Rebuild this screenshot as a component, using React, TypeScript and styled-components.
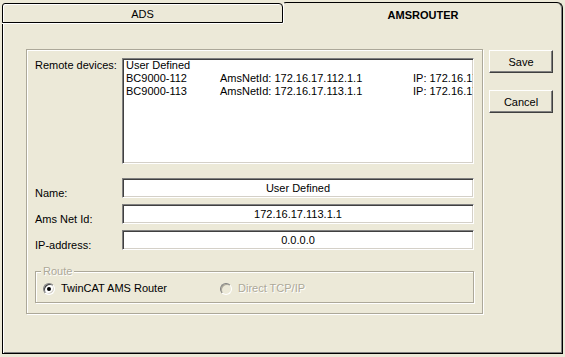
import styled, { createGlobalStyle, css } from 'styled-components';

const GlobalStyle = createGlobalStyle`
    html, body {
        margin: 0;
        padding: 0;
        background: #ECE9D8;
    }
    body {
        font-family: "Liberation Sans", Arial, sans-serif;
        font-size: 11px;
        color: #000;
    }
`

const sunken = css`
    border: 1px solid;
    border-color: #808080 #fff #fff #808080;
    box-shadow: inset 1px 1px 0 #404040, inset -1px -1px 0 #D4D0C8;
`

const etched = css`
    border: 1px solid #ACA899;
    box-shadow: inset 1px 1px 0 #fff, 1px 1px 0 #fff;
`

const Window = styled.div`
    width: 565px;
    height: 357px;
    box-sizing: border-box;
    padding: 2px 2px 3px 2px;
    background: #ECE9D8;
`
const TabStrip = styled.div`
    display: flex;
    align-items: flex-end;
    height: 21px;
`
type TabProps = {
    $active?: boolean
}
const Tab = styled.div<TabProps>`
    box-sizing: border-box;
    position: relative;
    z-index: 1;
    display: flex;
    justify-content: center;
    align-items: flex-start;
    line-height: 13px;
    ${({ $active }) => $active ? css`
        flex: 1;
        height: 21px;
        padding-top: 6px;
        border-top: 1px solid #000;
        border-right: 1px solid #000;
        border-left: 1px solid #fff;
        border-radius: 3px 6px 0 0;
        box-shadow: inset -1px 0 0 #808080;
        font-weight: bold;
    ` : css`
        width: 281px;
        height: 20px;
        padding-top: 4px;
        border: 1px solid #000;
        border-radius: 3px 4px 0 0;
        box-shadow: inset 1px 1px 0 #fff, 0 1px 0 #fff;
    `}
`
const Panel = styled.div`
    box-sizing: border-box;
    height: 331px;
    border: 1px solid #000;
    border-top: none;
    box-shadow: inset 1px 0 0 #fff, inset -1px -1px 0 #808080;
    padding: 26px 0 0 23px;
    display: flex;
    align-items: flex-start;
    gap: 6px;
`
const GroupBox = styled.div`
    box-sizing: border-box;
    width: 457px;
    height: 265px;
    padding: 8px 0 0 8px;
    ${etched}
`
const FormGrid = styled.div`
    display: grid;
    grid-template-columns: 87px 352px;
    row-gap: 4px;
`
type LabelProps = {
    $offset: number
}
const Label = styled.div<LabelProps>`
    line-height: 13px;
    padding-top: ${({ $offset }) => $offset}px;
    white-space: nowrap;
`
const ListBox = styled.div`
    box-sizing: border-box;
    height: 106px;
    margin-bottom: 10px;
    padding: 0 0 0 3px;
    background: #fff;
    overflow: hidden;
    ${sunken}
`
const DeviceRow = styled.div`
    display: grid;
    grid-template-columns: 94px 193px max-content;
    line-height: 13px;
    white-space: nowrap;
`
const Field = styled.div`
    box-sizing: border-box;
    height: 20px;
    line-height: 18px;
    text-align: center;
    background: #fff;
    ${sunken}
`
const RouteBox = styled.fieldset`
    box-sizing: border-box;
    width: 439px;
    min-width: 0;
    margin: 13px 0 0 0;
    padding: 0 0 7px 7px;
    ${etched}
`
const Legend = styled.legend`
    padding: 0 2px;
    margin-left: -2px;
    line-height: 13px;
    background: #ECE9D8;
    color: #ACA899;
    text-shadow: 1px 1px 0 #fff;
`
const RadioRow = styled.div`
    display: grid;
    grid-template-columns: 177px max-content;
    margin-top: 4px;
    line-height: 13px;
`
type RadioProps = {
    $disabled?: boolean
}
const RadioOption = styled.label<RadioProps>`
    display: flex;
    align-items: center;
    gap: 6px;
    color: ${({ $disabled }) => $disabled ? '#ACA899' : '#000'};
    text-shadow: ${({ $disabled }) => $disabled ? '1px 1px 0 #fff' : 'none'};
`
type CircleProps = {
    $checked?: boolean,
    $disabled?: boolean
}
const RadioCircle = styled.span<CircleProps>`
    box-sizing: border-box;
    width: 12px;
    height: 12px;
    border-radius: 50%;
    border: 1px solid;
    border-color: #808080 #fff #fff #808080;
    box-shadow: ${({ $disabled }) => $disabled
        ? 'inset 1px 1px 0 #ACA899'
        : 'inset 1px 1px 0 #404040, inset -1px -1px 0 #D4D0C8'};
    background: ${({ $disabled }) => $disabled ? '#ECE9D8' : '#fff'};
    display: flex;
    align-items: center;
    justify-content: center;

    &::after{
        content: '';
        width: 4px;
        height: 4px;
        border-radius: 50%;
        background: #000;
        display: ${({ $checked }) => $checked ? 'block' : 'none'};
    }
`
const ButtonColumn = styled.div`
    display: flex;
    flex-direction: column;
    gap: 17px;
    margin-top: 1px;
`
const Button = styled.button`
    box-sizing: border-box;
    width: 64px;
    height: 23px;
    padding: 0;
    font: inherit;
    color: #000;
    background: #ECE9D8;
    border: 1px solid;
    border-color: #fff #404040 #404040 #fff;
    box-shadow: inset -1px -1px 0 #808080;
    cursor: pointer;
`

type Device = {
    name: string,
    netId?: string,
    ip?: string
}

const devices: Device[] = [
    { name: 'User Defined' },
    { name: 'BC9000-112', netId: '172.16.17.112.1.1', ip: '172.16.17.112' },
    { name: 'BC9000-113', netId: '172.16.17.113.1.1', ip: '172.16.17.113' },
]

const App = () => {
    return (
        <Window>
            <GlobalStyle />
            <TabStrip>
                <Tab>ADS</Tab>
                <Tab $active>AMSROUTER</Tab>
            </TabStrip>
            <Panel>
                <GroupBox>
                    <FormGrid>
                        <Label $offset={1}>Remote devices:</Label>
                        <ListBox>
                            {
                                devices.map(d => (
                                    <DeviceRow key={d.name}>
                                        <span>{d.name}</span>
                                        <span>{d.netId && `AmsNetId: ${d.netId}`}</span>
                                        <span>{d.ip && `IP: ${d.ip}`}</span>
                                    </DeviceRow>
                                ))
                            }
                        </ListBox>
                        <Label $offset={9}>Name:</Label>
                        <Field>User Defined</Field>
                        <Label $offset={9}>Ams Net Id:</Label>
                        <Field>172.16.17.113.1.1</Field>
                        <Label $offset={9}>IP-address:</Label>
                        <Field>0.0.0.0</Field>
                    </FormGrid>
                    <RouteBox>
                        <Legend>Route</Legend>
                        <RadioRow>
                            <RadioOption>
                                <RadioCircle $checked />
                                TwinCAT AMS Router
                            </RadioOption>
                            <RadioOption $disabled>
                                <RadioCircle $disabled />
                                Direct TCP/IP
                            </RadioOption>
                        </RadioRow>
                    </RouteBox>
                </GroupBox>
                <ButtonColumn>
                    <Button>Save</Button>
                    <Button>Cancel</Button>
                </ButtonColumn>
            </Panel>
        </Window>
    );
};

export default App;
